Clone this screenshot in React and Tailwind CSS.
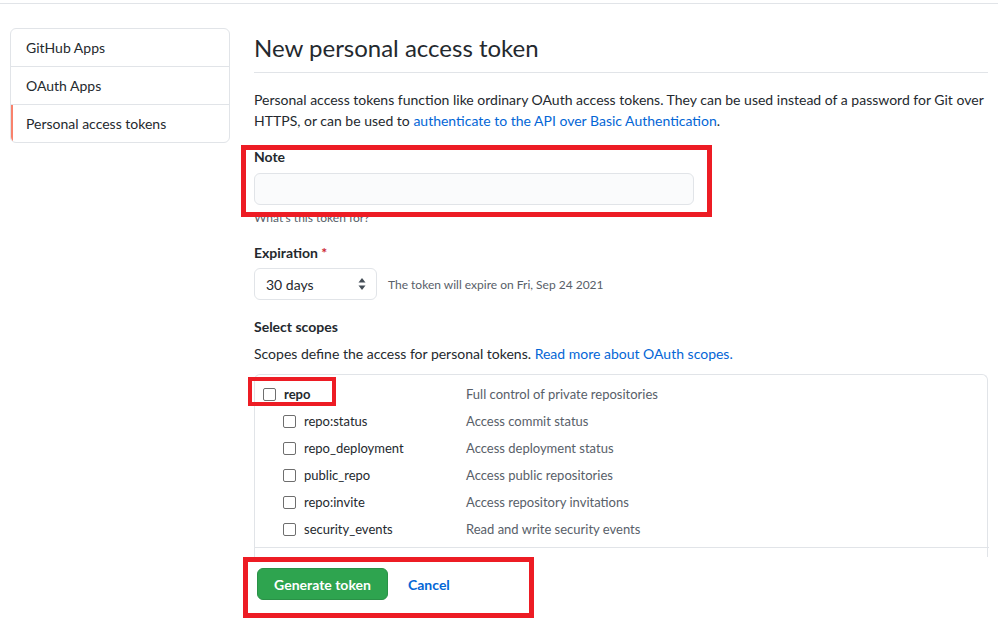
import React from "react";

const scopes = [
  { name: "repo:status", desc: "Access commit status" },
  { name: "repo_deployment", desc: "Access deployment status" },
  { name: "public_repo", desc: "Access public repositories" },
  { name: "repo:invite", desc: "Access repository invitations" },
  { name: "security_events", desc: "Read and write security events" },
];

const Check = () => (
  <span className="inline-block w-[13px] h-[13px] border border-[#6e6e6e] rounded-[2px] bg-white shrink-0" />
);

const SortArrows = () => (
  <svg width="8" height="14" viewBox="0 0 8 14" className="text-[#444d56]">
    <path d="M4 1 L7.5 5.5 L0.5 5.5 Z" fill="currentColor" />
    <path d="M4 13 L7.5 8.5 L0.5 8.5 Z" fill="currentColor" />
  </svg>
);

const App = () => {
  return (
    <div
      className="relative w-[998px] h-[622px] overflow-hidden bg-white text-[#24292e] text-[14px] leading-[21px]"
      style={{ fontFamily: 'Lato, "Liberation Sans", Arial, sans-serif' }}
    >
      <div className="h-[4px] border-b border-[#e1e4e8]" />

      <div className="flex pl-[10px] pr-[10px] pt-[24px]">
        {/* sidebar */}
        <div className="w-[220px] shrink-0">
          <div className="border border-[#e1e4e8] rounded-[6px] overflow-hidden">
            <div className="h-[38px] flex items-center pl-[15px] border-b border-[#e1e4e8]">
              GitHub Apps
            </div>
            <div className="h-[38px] flex items-center pl-[15px] border-b border-[#e1e4e8]">
              OAuth Apps
            </div>
            <div className="h-[37px] flex items-center pl-[13px] border-l-2 border-[#f9826c]">
              Personal access tokens
            </div>
          </div>
        </div>

        {/* main */}
        <div className="ml-[24px] w-[734px]">
          <div className="pt-[5px] pb-[9px] border-b border-[#e1e4e8]">
            <h1 className="text-[24px] leading-[30px] font-normal">New personal access token</h1>
          </div>

          <p className="mt-[16px]">
            Personal access tokens function like ordinary OAuth access tokens. They can be used instead of a password for Git over
            <br />
            HTTPS, or can be used to{" "}
            <a className="text-[#0366d6]">authenticate to the API over Basic Authentication</a>.
          </p>

          <div className="mt-[15px]">
            <div className="font-bold">Note</div>
            <div className="mt-[6px] w-[440px] h-[32px] bg-[#fafbfc] border border-[#e1e4e8] rounded-[6px]" />
            <div className="mt-[4px] text-[12px] leading-[18px] text-[#586069]">What's this token for?</div>
          </div>

          <div className="mt-[15px]">
            <div className="font-bold">
              Expiration <span className="text-[#cb2431]">*</span>
            </div>
            <div className="mt-[5px] flex items-center">
              <div className="w-[123px] h-[32px] border border-[#e1e4e8] rounded-[6px] flex items-center justify-between pl-[11px] pr-[10px]">
                <span>30 days</span>
                <SortArrows />
              </div>
              <span className="ml-[11px] text-[12px] text-[#586069]">The token will expire on Fri, Sep 24 2021</span>
            </div>
          </div>

          <div className="mt-[16px] font-bold">Select scopes</div>
          <p className="mt-[6px]">
            Scopes define the access for personal tokens.{" "}
            <a className="text-[#0366d6]">Read more about OAuth scopes.</a>
          </p>

          <div className="mt-[10px] border-t border-l border-r border-[#e1e4e8] rounded-t-[6px] text-[13px]">
            <div className="pt-[6px] pb-[4px] border-b border-[#e1e4e8] mr-[-2px]">
              <div className="h-[27px] flex items-center">
                <div className="w-[211px] flex items-center pl-[8px] gap-[8px]">
                  <Check />
                  <span className="font-bold">repo</span>
                </div>
                <span className="text-[#586069]">Full control of private repositories</span>
              </div>
              {scopes.map((s) => (
                <div key={s.name} className="h-[27px] flex items-center">
                  <div className="w-[211px] flex items-center pl-[28px] gap-[8px]">
                    <Check />
                    <span>{s.name}</span>
                  </div>
                  <span className="text-[#586069]">{s.desc}</span>
                </div>
              ))}
            </div>
            <div className="h-[9px]" />
          </div>

          <div className="mt-[11px] ml-[3px] flex items-center">
            <button className="w-[131px] h-[32px] bg-[#2ea44f] text-white font-bold rounded-[6px] border border-[#2a9147]">
              Generate token
            </button>
            <a className="ml-[20px] text-[#0366d6] font-bold">Cancel</a>
          </div>
        </div>
      </div>

      {/* annotation boxes */}
      <div className="absolute left-[241px] top-[145px] w-[471px] h-[72px] border-[5px] border-[#ed1c24]" />
      <div className="absolute left-[248px] top-[377px] w-[88px] h-[29px] border-[4px] border-[#ed1c24]" />
      <div className="absolute left-[243px] top-[557px] w-[291px] h-[61px] border-[5px] border-[#ed1c24]" />
    </div>
  );
};

export default App;
